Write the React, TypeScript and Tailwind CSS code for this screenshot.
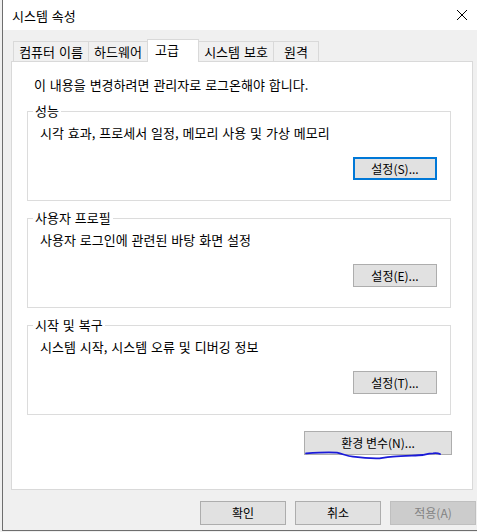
import React from "react";

const font = { fontFamily: '"Noto Sans CJK KR", "Noto Sans", sans-serif' };

function Btn({ children, def, disabled, className = "" }: { children: React.ReactNode; def?: boolean; disabled?: boolean; className?: string }) {
  const base = "flex items-center justify-center text-[12px] leading-none";
  const look = disabled
    ? "bg-[#cccccc] border border-[#bfbfbf] text-[#838383]"
    : def
    ? "bg-[#e1e1e1] border-2 border-[#0078d7] text-black"
    : "bg-[#e1e1e1] border border-[#adadad] text-black";
  return <div className={`${base} ${look} ${className}`}>{children}</div>;
}

function Group({ label, text, btn, className = "" }: { label: string; text: string; btn: string; className?: string }) {
  return (
    <div className={`relative border border-[#dcdcdc] h-[90px] w-[424px] ${className}`}>
      <div className="absolute -top-[10px] left-[5px] bg-white px-[2px] text-[13px] [word-spacing:1px] leading-[18px] text-black">{label}</div>
      <div className="pl-[12px] pt-[12px] text-[13px] [word-spacing:1px] leading-[18px] text-black">{text}</div>
      <div className="flex justify-end pr-[13px] pt-[15px]">
        <Btn def={btn === "설정(S)..."} className="w-[84px] h-[23px]">{btn}</Btn>
      </div>
    </div>
  );
}

export default function App() {
  const tabs = [
    { t: "컴퓨터 이름", w: 76 },
    { t: "하드웨어", w: 60 },
    { t: "고급", w: 52, sel: true },
    { t: "시스템 보호", w: 76 },
    { t: "원격", w: 46 },
  ];
  return (
    <div className="w-[477px] h-[532px] bg-[#f0f0f0] overflow-hidden" style={font}>
      <div className="relative ml-[2px] w-[475px] h-[531px] border-l border-b border-[#6e6e6e] bg-[#f0f0f0]">
        {/* title bar */}
        <div className="h-[30px] bg-white flex items-center justify-between pl-[9px] pr-[8px]">
          <span className="text-[13px] [word-spacing:1px] text-black leading-none">시스템 속성</span>
          <svg width="12" height="12" viewBox="0 0 12 12" className="mr-[1px]">
            <path d="M1 1 L11 11 M11 1 L1 11" stroke="#000" strokeWidth="1" />
          </svg>
        </div>
        {/* tabs */}
        <div className="flex items-end pl-[10px] pt-[8px] h-[31px] relative z-10">
          {tabs.map((tb, i) =>
            tb.sel ? (
              <div
                key={tb.t}
                style={{ width: tb.w }}
                className="h-[23px] -mb-px -ml-px bg-white border border-b-0 border-[#d9d9d9] text-[13px] text-black pl-[7px] pt-[1px] leading-[18px]"
              >
                {tb.t}
              </div>
            ) : (
              <div
                key={tb.t}
                style={{ width: tb.w }}
                className={`h-[20px] bg-[#f0f0f0] border border-b-0 border-[#d9d9d9] ${i === 0 ? "" : "-ml-px"} text-[13px] [word-spacing:1px] text-black flex items-center justify-center leading-none`}
              >
                {tb.t}
              </div>
            )
          )}
        </div>
        {/* panel */}
        <div className="ml-[8px] w-[462px] h-[429px] bg-white border border-[#d9d9d9] relative">
          <div className="pl-[22px] pt-[14px] text-[13px] [word-spacing:1px] leading-[18px] text-black">이 내용을 변경하려면 관리자로 로그온해야 합니다.</div>
          <div className="pl-[15px] pt-[17px] flex flex-col gap-[17px]">
            <Group label="성능" text="시각 효과, 프로세서 일정, 메모리 사용 및 가상 메모리" btn="설정(S)..." />
            <Group label="사용자 프로필" text="사용자 로그인에 관련된 바탕 화면 설정" btn="설정(E)..." />
            <Group label="시작 및 복구" text="시스템 시작, 시스템 오류 및 디버깅 정보" btn="설정(T)..." />
          </div>
          <div className="flex justify-end pr-[20px] pt-[16px]">
            <Btn className="w-[148px] h-[24px] text-[12.5px]">환경 변수(N)...</Btn>
          </div>
        </div>
        {/* bottom buttons */}
        <div className="flex justify-end gap-[9px] pt-[11px] pr-[1px]">
          <Btn className="w-[86px] h-[24px]">확인</Btn>
          <Btn className="w-[86px] h-[24px]">취소</Btn>
          <Btn disabled className="w-[86px] h-[24px]">적용(A)</Btn>
        </div>
        {/* scribble */}
        <svg className="absolute left-0 top-0 pointer-events-none" width="475" height="531" viewBox="0 0 475 531">
          <path
            d="M303 453.3 C315 452.5 328 452 334 452.7 C340 454 344 456 350 456.7 C360 458 370 458.5 376.7 458.3 C382 457.5 385 457 390 456.7 C400 456 412 455.5 420 455 C424 454 426 453.3 430 453.3 C433 453 436 453.5 437 454"
            stroke="#1a1ad8"
            strokeWidth="1.8"
            fill="none"
            strokeLinecap="round"
          />
        </svg>
      </div>
    </div>
  );
}
